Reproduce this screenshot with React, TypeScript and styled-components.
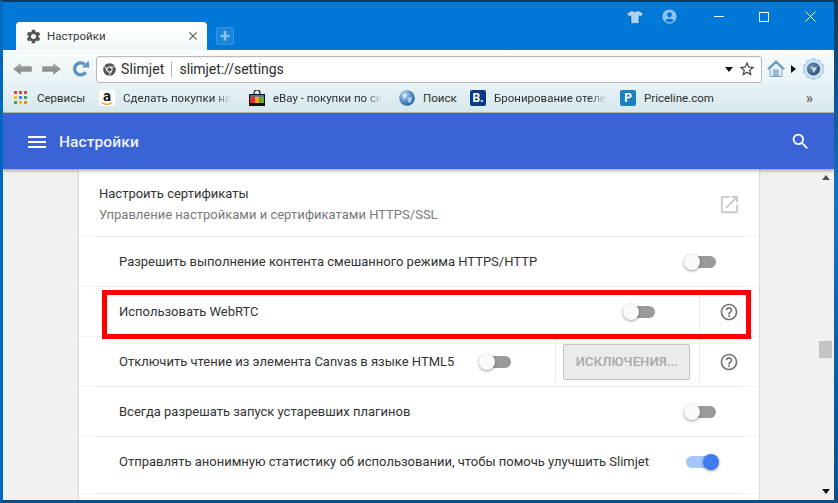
import React from "react";
import styled, { createGlobalStyle } from "styled-components";
import { MdSettings, MdClose, MdSearch, MdMenu, MdOpenInNew, MdHelpOutline, MdAccountCircle, MdStarBorder } from "react-icons/md";
import { FaTshirt, FaChrome } from "react-icons/fa";

const Global = createGlobalStyle`
  html, body { margin: 0; padding: 0; width: 838px; height: 503px; overflow: hidden; background: #0a4f86; }
  * { box-sizing: border-box; }
  body { font-family: Roboto, "Noto Sans", sans-serif; color: #333; }
`;

const Desktop = styled.div`
  width: 838px; height: 503px; display: flex;
  background: linear-gradient(180deg, #0b3a5e 0, #1276c4 40%, #0d5fa4 70%, #0a4f86 100%);
`;
const Frame = styled.div`
  width: 834px; height: 503px; display: flex; flex-direction: column;
  background: #0078d7;
  border-top: 2px solid #12395a;
  border-left: 3px solid #0069bd;
  border-bottom: 3px solid #0b4f86;
  overflow: hidden;
`;
const TitleBar = styled.div`
  height: 48px; flex: none; display: flex; align-items: flex-end; padding-left: 13px; position: relative;
`;
const Tab = styled.div`
  width: 191px; height: 28px; display: flex; align-items: center; padding: 0 7px 0 9px;
  background: linear-gradient(180deg, #ffffff 0, #fbfdfd 50%, #eef6f8 100%);
  border-radius: 4px 4px 0 0;
  font-size: 11.5px; color: #3a3a3a;
  span { margin-left: 5px; flex: 1; }
`;
const NewTab = styled.div`
  width: 18px; height: 18px; margin: 0 0 5px 9px; border-radius: 2px;
  border: 1px solid #3d94dc; background: #1a85da;
  display: flex; align-items: center; justify-content: center;
  color: #8ec4ee; font-size: 18px; line-height: 16px; font-weight: 700;
`;
const TitleRight = styled.div`
  margin-left: auto; align-self: flex-start; display: flex; align-items: center; height: 29px; color: #fff;
`;
const Toolbars = styled.div`
  background: linear-gradient(180deg, #f7fbfc 0, #eaf4f6 50%, #d6e8ed 100%);
  border-bottom: 1px solid #b9b5b0;
  height: 63px; flex: none; display: flex; flex-direction: column;
`;
const NavRow = styled.div`
  height: 33px; flex: none; display: flex; align-items: center; padding: 5px 0 0 10px;
`;
const Address = styled.div`
  width: 666px; height: 27px; margin-left: 6px; background: #fff; border: 1px solid #b8bcc0; border-radius: 3px;
  display: flex; align-items: center; padding: 0 5px 0 6px; font-size: 14px; color: #2d2d2d;
  box-shadow: inset 0 1px 1px rgba(0,0,0,.06);
`;
const Brand = styled.span`
  margin-left: 5px; padding-right: 7px; border-right: 1px solid #b4b4b4; line-height: 16px; letter-spacing: .1px;
`;
const Url = styled.span`
  margin-left: 7px; flex: 1; letter-spacing: -.05px;
`;
const Caret = styled.i<{ $dir: "down" | "right" | "up" }>`
  display: block; width: 0; height: 0; flex: none;
  ${p => p.$dir === "down" && "border-left: 4px solid transparent; border-right: 4px solid transparent; border-top: 5px solid #111;"}
  ${p => p.$dir === "up" && "border-left: 4px solid transparent; border-right: 4px solid transparent; border-bottom: 5px solid #505050;"}
  ${p => p.$dir === "right" && "border-top: 4px solid transparent; border-bottom: 4px solid transparent; border-left: 5px solid #111;"}
`;
const BookRow = styled.div`
  flex: 1; display: flex; align-items: center; padding-left: 11px; font-size: 11.5px; color: #2f2f2f;
`;
const Book = styled.div<{ $w: number }>`
  width: ${p => p.$w}px; flex: none; display: flex; align-items: center; gap: 8px;
  svg { flex: none; }
`;
const BookText = styled.span<{ $fade?: boolean }>`
  white-space: nowrap;
  ${p => p.$fade && "-webkit-mask-image: linear-gradient(90deg,#000 85%,transparent 100%); mask-image: linear-gradient(90deg,#000 85%,transparent 100%);"}
`;
const Tile = styled.div<{ $bg: string }>`
  width: 16px; height: 16px; flex: none; border-radius: 2px; background: ${p => p.$bg};
  color: #fff; font-weight: 700; font-size: 12px; line-height: 16px; text-align: center;
`;
const AmazonTile = styled.div`
  width: 16px; height: 16px; flex: none; background: #fff; border-radius: 2px; position: relative;
  color: #111; font-weight: 700; font-size: 15px; line-height: 13px; text-align: center;
`;
const Header = styled.div`
  height: 56px; flex: none; background: #3a63d5; display: flex; align-items: center; padding: 1px 23px 0 22px; color: #fff;
  box-shadow: 0 2px 3px rgba(0,0,0,.3); position: relative; z-index: 1;
`;
const HeaderTitle = styled.div`
  font-size: 15.5px; font-weight: 500; margin-left: 10px; flex: 1; color: #eef2fc; letter-spacing: .1px;
`;
const Main = styled.div`
  flex: 1; display: flex; background: #f1f1f1; min-height: 0; position: relative;
`;
const Page = styled.div`
  flex: 1; padding-left: 76px; overflow: hidden;
`;
const Card = styled.div`
  width: 680px; height: 100%; background: #fff; box-shadow: 0 0 2px rgba(0,0,0,.28);
`;
const Row = styled.div<{ $h: number; $pad?: number; $bottom?: number; $top?: number }>`
  height: ${p => p.$h}px; position: relative; display: flex; align-items: center;
  padding: ${p => p.$top ?? 0}px 22px ${p => p.$bottom ?? 0}px ${p => p.$pad ?? 40}px; font-size: 13px; color: #333;
  border-bottom: 1px solid #f3f3f3;
  &::after { content: ""; position: absolute; left: 20px; right: 20px; bottom: -1px; height: 1px; background: #e9e9e9; }
`;
const Label = styled.div<{ $fit?: boolean }>`
  flex: ${p => (p.$fit ? "none" : 1)}; white-space: nowrap;
`;
const TwoLine = styled.div`
  flex: 1; display: flex; flex-direction: column; gap: 6px; line-height: 15px;
  small { font-size: 13px; color: #7a7a7a; }
`;
const Toggle = styled.div<{ $on?: boolean }>`
  width: 32px; height: 16px; flex: none; position: relative;
  &::before { content: ""; position: absolute; top: 2px; left: ${p => (p.$on ? 0 : 3)}px; right: ${p => (p.$on ? 2 : 0)}px; height: 12px; border-radius: 6px; background: ${p => (p.$on ? "#a6c5fa" : "#9a9a9a")}; }
  &::after { content: ""; position: absolute; top: 0; ${p => (p.$on ? "right: -1px" : "left: 0")}; width: 16px; height: 16px; border-radius: 50%; background: ${p => (p.$on ? "#3f7cf0" : "#fafafa")}; box-shadow: 0 1px 3px rgba(0,0,0,.4); }
`;
const Slot = styled.div<{ $w: number }>`
  width: ${p => p.$w}px; flex: none; height: 42px; display: flex; align-items: center; justify-content: center;
  border-left: 1px solid #eaeaea; padding-right: 2px;
`;
const HelpSlot = styled(Slot)`
  justify-content: flex-end; padding-right: 0;
  svg { flex: none; margin-right: -2px; }
`;
const Spacer = styled.div<{ $w: number }>`
  width: ${p => p.$w}px; flex: none;
`;
const DisabledBtn = styled.div`
  width: 127px; height: 36px; background: #ebebeb; border: 1px solid #c2c2c2; border-radius: 2px;
  color: #a8a8a8; font-weight: 500; font-size: 13px; display: flex; align-items: center; justify-content: center;
  letter-spacing: .1px;
`;
const ScrollBar = styled.div`
  width: 17px; margin-right: 0; flex: none; display: flex; flex-direction: column; align-items: center; padding: 6px 0 6px 0;
`;
const Thumb = styled.div`
  width: 13px; height: 17px; background: #c4c4c4; margin-top: 161px;
`;
const Highlight = styled.div`
  position: absolute; left: 99px; top: 121px; width: 649px; height: 49px; border: 5px solid #ff0000; pointer-events: none;
`;

const ArrowIcon = ({ flip, ml = 0 }: { flip?: boolean; ml?: number }) => (
  <svg width="19" height="12" viewBox="0 0 19 12" style={{ marginLeft: ml, transform: flip ? "scaleX(-1)" : undefined, flex: "none" }}>
    <defs><linearGradient id="ag" x1="0" y1="0" x2="0" y2="1"><stop offset="0" stopColor="#a3a7a6" /><stop offset="1" stopColor="#7f8584" /></linearGradient></defs>
    <path d="M0.5 6 L7.5 0.7 V3.6 H18.5 V8.4 H7.5 V11.3 Z" fill="url(#ag)" stroke="#8b908f" strokeWidth=".5" />
  </svg>
);
const Reload = () => (
  <svg width="18" height="18" viewBox="0 0 18 18" style={{ marginLeft: 11, flex: "none" }}>
    <path d="M13.6 12.2 A6 6 0 1 1 12.6 4.4" fill="none" stroke="#5c92bd" strokeWidth="3.4" />
    <path d="M10.2 7.4 L17.4 7.6 L16.6 0.6 Z" fill="#5c92bd" />
  </svg>
);
const HomeIcon = () => (
  <svg width="18" height="18" viewBox="0 0 18 18" style={{ marginLeft: 5, flex: "none" }}>
    <path d="M3 8.5 V16.5 H15 V8.5 L9 3 Z" fill="#e6f1f8" stroke="#7ba6c6" />
    <path d="M0.8 9.2 L9 1.5 L17.2 9.2" fill="none" stroke="#5e92b8" strokeWidth="1.7" />
    <rect x="6.6" y="10" width="4.8" height="6" fill="#a4c4da" stroke="#6c9abc" strokeWidth=".6" />
    <path d="M9 10V16" stroke="#6c9abc" strokeWidth=".6" />
  </svg>
);
const GearGlobe = () => (
  <svg width="23" height="24" viewBox="0 0 24 24" style={{ marginLeft: 6, flex: "none" }}>
    <defs><radialGradient id="gg" cx=".4" cy=".4" r=".7"><stop offset="0" stopColor="#7b9dbd" /><stop offset=".7" stopColor="#3a5d86" /><stop offset="1" stopColor="#28466c" /></radialGradient></defs>
    <g fill="#bcd7ec">
      {Array.from({ length: 10 }).map((_, i) => (
        <rect key={i} x="10" y="0.5" width="4" height="5" transform={`rotate(${i * 36} 12 12)`} />
      ))}
    </g>
    <circle cx="12" cy="12" r="10" fill="#cfe3f2" stroke="#a9cbe4" />
    <circle cx="12" cy="12" r="6.8" fill="url(#gg)" />
    <path d="M8 9 L13 11 L16 9 L14 13 L12 16 L11 12 Z" fill="#d9e6f0" />
  </svg>
);
const Apps = () => (
  <svg width="13" height="13" viewBox="0 0 13 13">
    {[["#e94335", "#e94335", "#e94335"], ["#fbbc05", "#4285f4", "#34a853"], ["#34a853", "#fbbc05", "#ea8a1d"]].map((r, y) =>
      r.map((c, x) => <rect key={x + "" + y} x={x * 5} y={y * 5} width="3" height="3" fill={c} />)
    )}
  </svg>
);
const Ebay = () => (
  <svg width="16" height="16" viewBox="0 0 16 16">
    <path d="M5 5 V3 A3 3 0 0 1 11 3 V5" fill="none" stroke="#111" strokeWidth="1.2" />
    <rect x="0" y="4" width="16" height="12" fill="#111" />
    <rect x="1" y="6" width="5" height="7" fill="#d8322e" />
    <rect x="6" y="6" width="4.5" height="7" fill="#f3a91f" />
    <rect x="10.5" y="6" width="4.5" height="7" fill="#6aa92e" />
    <rect x="1" y="5" width="14" height="1.5" fill="#2e6fc8" />
  </svg>
);
const Globe = () => (
  <svg width="16" height="16" viewBox="0 0 16 16">
    <defs><radialGradient id="gl" cx=".35" cy=".3" r=".8"><stop offset="0" stopColor="#b6d6f0" /><stop offset=".6" stopColor="#4a86bf" /><stop offset="1" stopColor="#1f5c96" /></radialGradient></defs>
    <circle cx="8" cy="8" r="7.8" fill="url(#gl)" />
    <path d="M3 5 L7 3 L8 6 L5 9 Z M9 8 L13 7 L12 12 L9.5 13 Z" fill="#dfeaf3" opacity=".75" />
  </svg>
);
const Smile = () => (
  <svg width="12" height="4" viewBox="0 0 12 4" style={{ position: "absolute", left: 2, bottom: 0 }}>
    <path d="M0.5 0.5 Q6 4.5 11.5 0.5" fill="none" stroke="#f29a1f" strokeWidth="1.3" />
  </svg>
);

export default function App() {
  return (
    <Desktop>
      <Global />
      <Frame>
        <TitleBar>
          <Tab>
            <MdSettings size={17} color="#555" style={{ flex: "none" }} />
            <span>Настройки</span>
            <MdClose size={14} color="#5f5f5f" />
          </Tab>
          <NewTab>+</NewTab>
          <TitleRight>
            <FaTshirt size={16} color="#a9d3f2" stroke="#123" strokeWidth={14} />
            <MdAccountCircle size={17} color="#8fc4ec" style={{ marginLeft: 18 }} />
            <svg width="10" height="2" style={{ marginLeft: 36 }}><rect width="10" height="1" fill="#fff" /></svg>
            <svg width="10" height="10" style={{ marginLeft: 35 }}><rect x=".5" y=".5" width="9" height="9" fill="none" stroke="#fff" /></svg>
            <svg width="11" height="11" style={{ marginLeft: 36, marginRight: 18 }}><path d="M.5 .5L10.5 10.5M10.5 .5L.5 10.5" stroke="#fff" /></svg>
          </TitleRight>
        </TitleBar>
        <Toolbars>
          <NavRow>
            <ArrowIcon />
            <ArrowIcon flip ml={10} />
            <Reload />
            <Address>
              <FaChrome size={13} color="#555" style={{ flex: "none" }} />
              <Brand>Slimjet</Brand>
              <Url>slimjet://settings</Url>
              <Caret $dir="down" />
              <MdStarBorder size={18} color="#444" style={{ marginLeft: 5 }} />
            </Address>
            <HomeIcon />
            <span style={{ width: 6 }} />
            <Caret $dir="right" />
            <GearGlobe />
          </NavRow>
          <BookRow>
            <Book $w={85}><Apps /><span style={{ marginLeft: 2 }}>Сервисы</span></Book>
            <Book $w={150}><AmazonTile>a<Smile /></AmazonTile><BookText $fade>Сделать покупки на</BookText></Book>
            <Book $w={150}><Ebay /><BookText $fade>eBay - покупки по ск</BookText></Book>
            <Book $w={71}><Globe /><BookText>Поиск</BookText></Book>
            <Book $w={150}><Tile $bg="#0c3b85">B.</Tile><BookText $fade>Бронирование отеле</BookText></Book>
            <Book $w={186}><Tile $bg="#1a80c0">P</Tile><BookText>Priceline.com</BookText></Book>
            <span style={{ color: "#666", fontWeight: 700, fontSize: 14, lineHeight: "12px" }}>»</span>
          </BookRow>
        </Toolbars>
        <Header>
          <MdMenu size={24} />
          <HeaderTitle>Настройки</HeaderTitle>
          <MdSearch size={21} />
        </Header>
        <Main>
          <Page>
            <Card>
              <Row $h={68} $pad={20} $top={3}>
                <TwoLine>
                  <span>Настроить сертификаты</span>
                  <small>Управление настройками и сертификатами HTTPS/SSL</small>
                </TwoLine>
                <MdOpenInNew size={23} color="#c9c9c9" style={{ marginRight: -4, flex: "none" }} />
              </Row>
              <Row $h={50}>
                <Label>Разрешить выполнение контента смешанного режима HTTPS/HTTP</Label>
                <Toggle />
                <Spacer $w={21} />
              </Row>
              <Row $h={50}>
                <Label>Использовать WebRTC</Label>
                <Toggle />
                <Spacer $w={44} />
                <HelpSlot $w={38}><MdHelpOutline size={20} color="#757575" /></HelpSlot>
              </Row>
              <Row $h={50}>
                <Label $fit>Отключить чтение из элемента Canvas в языке HTML5</Label>
                <Spacer $w={25} />
                <Toggle />
                <Spacer $w={44} />
                <Slot $w={144}><DisabledBtn>ИСКЛЮЧЕНИЯ...</DisabledBtn></Slot>
                <HelpSlot $w={38}><MdHelpOutline size={20} color="#757575" /></HelpSlot>
              </Row>
              <Row $h={50}>
                <Label>Всегда разрешать запуск устаревших плагинов</Label>
                <Toggle />
                <Spacer $w={21} />
              </Row>
              <Row $h={57} $bottom={7}>
                <Label>Отправлять анонимную статистику об использовании, чтобы помочь улучшить Slimjet</Label>
                <Toggle $on />
                <Spacer $w={19} />
              </Row>
            </Card>
          </Page>
          <ScrollBar>
            <Caret $dir="up" />
            <Thumb />
            <span style={{ flex: 1 }} />
            <Caret $dir="down" />
          </ScrollBar>
          <Highlight />
        </Main>
      </Frame>
    </Desktop>
  );
}
